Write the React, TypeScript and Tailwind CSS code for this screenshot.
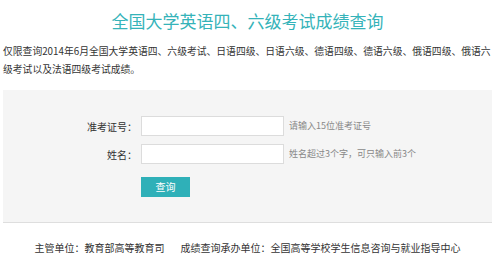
import React from "react";

const fields = [
  { label: "准考证号：", hint: "请输入15位准考证号" },
  { label: "姓名：", hint: "姓名超过3个字，可只输入前3个" },
];

export default function App() {
  return (
    <div className="w-[500px] h-[256px] bg-white font-['Noto_Sans_CJK_SC','Noto_Sans',sans-serif] text-[#333]">
      <div className="ml-[3px] w-[489px]">
        <h1 className="pt-2 text-center text-[17px] leading-[26px] font-normal text-[#35b3b9]">
          全国大学英语四、六级考试成绩查询
        </h1>
        <p className="mt-2 text-[9.8px] leading-[18px]">
          仅限查询2014年6月全国大学英语四、六级考试、日语四级、日语六级、德语四级、德语六级、俄语四级、俄语六级考试以及法语四级考试成绩。
        </p>

        <div className="mt-3 bg-[#f5f5f5] border-b border-[#dedede] pt-[26px] pb-[25px]">
          <div className="flex flex-col gap-2">
            {fields.map((f) => (
              <div key={f.label} className="flex items-center h-5">
                <label className="w-[134px] text-right text-[10px] text-[#333]">{f.label}</label>
                <input
                  type="text"
                  className="ml-1 w-[143px] h-5 bg-white border border-[#dcdcdc] outline-none px-1 text-[10px]"
                />
                <span className="ml-[5px] text-[9px] text-[#888]">{f.hint}</span>
              </div>
            ))}
            <div className="pl-[138px]">
              <button className="w-[49px] h-5 bg-[#2fb0b8] text-white text-[10px] leading-5">查询</button>
            </div>
          </div>
        </div>

        <p className="mt-[15px] text-center text-[10px] leading-5 text-[#333]">
          主管单位：教育部高等教育司<span className="ml-4">成绩查询承办单位：全国高等学校学生信息咨询与就业指导中心</span>
        </p>
      </div>
    </div>
  );
}
